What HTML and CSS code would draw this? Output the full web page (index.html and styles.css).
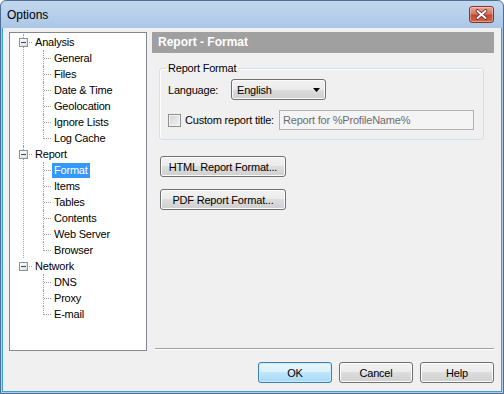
FILE: index.html
```html
<!DOCTYPE html>
<html>

<head>
    <meta charset="UTF-8">
    <title>Options</title>
    <link rel="stylesheet" href="styles.css">
</head>

<body>
    <div class="window">
        <div class="titlebar">
            <span class="title">Options</span>
            <span class="close">
                <svg width="25" height="17" viewBox="0 0 25 17">
                    <path d="M8.5 5 L16.5 12 M16.5 5 L8.5 12" stroke="#6b2418" stroke-width="3.6" stroke-linecap="round" fill="none"/>
                    <path d="M8.5 5 L16.5 12 M16.5 5 L8.5 12" stroke="#fff" stroke-width="2" stroke-linecap="round" fill="none"/>
                </svg>
            </span>
        </div>

        <div class="client">
            <div class="main">
                <!-- page tree -->
                <div class="tree-box">
                    <ul class="tree">
                        <li class="node">
                            <div class="row"><span class="toggle"></span><span class="dots"></span><span class="label">Analysis</span></div>
                            <ul class="children">
                                <li><span class="label">General</span></li>
                                <li><span class="label">Files</span></li>
                                <li><span class="label">Date &amp; Time</span></li>
                                <li><span class="label">Geolocation</span></li>
                                <li><span class="label">Ignore Lists</span></li>
                                <li><span class="label">Log Cache</span></li>
                            </ul>
                        </li>
                        <li class="node">
                            <div class="row"><span class="toggle"></span><span class="dots"></span><span class="label">Report</span></div>
                            <ul class="children">
                                <li><span class="label selected">Format</span></li>
                                <li><span class="label">Items</span></li>
                                <li><span class="label">Tables</span></li>
                                <li><span class="label">Contents</span></li>
                                <li><span class="label">Web Server</span></li>
                                <li><span class="label">Browser</span></li>
                            </ul>
                        </li>
                        <li class="node">
                            <div class="row"><span class="toggle"></span><span class="dots"></span><span class="label">Network</span></div>
                            <ul class="children">
                                <li><span class="label">DNS</span></li>
                                <li><span class="label">Proxy</span></li>
                                <li><span class="label">E-mail</span></li>
                            </ul>
                        </li>
                    </ul>
                </div>

                <!-- settings page -->
                <div class="panel">
                    <div class="panel-head">Report - Format</div>
                    <fieldset class="group">
                        <legend>Report Format</legend>
                        <div class="field-row">
                            <span class="field-label">Language:</span>
                            <div class="dropdown">
                                <span>English</span>
                                <svg class="arrow" width="7" height="4" viewBox="0 0 7 4"><polygon points="0,0 7,0 3.5,4" fill="#000"/></svg>
                            </div>
                        </div>
                        <div class="field-row title-row">
                            <label class="check"><span class="checkbox"></span>Custom report title:</label>
                            <div class="textbox">Report for %ProfileName%</div>
                        </div>
                    </fieldset>
                    <button class="btn btn-wide btn-first">HTML Report Format...</button>
                    <button class="btn btn-wide btn-second">PDF Report Format...</button>
                    <div class="separator"></div>
                </div>
            </div>

            <div class="footer">
                <button class="btn btn-default">OK</button>
                <button class="btn">Cancel</button>
                <button class="btn">Help</button>
            </div>
        </div>
    </div>
</body>

</html>
```

FILE: styles.css
```css
/* dialog window */
body {
    margin: 0;
    font-family: "Liberation Sans", Arial, sans-serif;
    font-size: 11px;
    letter-spacing: -0.2px;
    color: #000;
}

.window {
    width: 504px;
    height: 394px;
    box-sizing: border-box;
    display: flex;
    flex-direction: column;
    border: 1px solid #4d6f96;
    border-radius: 6px 6px 0 0;
    padding: 0 1px 1px 1px;
    background: linear-gradient(#c3d8ef, #aac6e6 28px, #b4cdea);
}

.titlebar {
    height: 27px;
    display: flex;
    align-items: center;
    justify-content: space-between;
    padding: 0 8px 0 5px;
}

.title {
    font-size: 12px;
    letter-spacing: 0;
    color: #000;
}

.close {
    width: 25px;
    height: 17px;
    box-sizing: border-box;
    border: 1px solid #8a3426;
    border-radius: 3px;
    background: linear-gradient(#e9a698, #d67563 45%, #c4462f 55%, #d0684f);
    box-shadow: inset 0 0 0 1px rgba(255, 255, 255, 0.35);
    display: flex;
}

.close svg {
    margin: -1px;
}

.client {
    flex: 1;
    display: flex;
    flex-direction: column;
    background: #f0f0f0;
    border: 1px solid #3aa0d8;
    border-top: none;
    padding: 4px 7px 8px 6px;
}

.main {
    display: flex;
    height: 319px;
}

/* tree */
.tree-box {
    width: 138px;
    box-sizing: border-box;
    border: 1px solid #828790;
    background: #fff;
}

.tree,
.children {
    list-style: none;
    margin: 0;
    padding: 0;
}

.tree {
    padding-top: 1px;
}

.node {
    margin-left: 13px;
    border-left: 1px dotted #a0a0a0;
}

.node:last-child {
    border-left-color: transparent;
}

.row {
    display: flex;
    align-items: center;
    height: 16px;
}

.toggle {
    width: 9px;
    height: 9px;
    box-sizing: border-box;
    margin-left: -5px;
    border: 1px solid #919191;
    background: linear-gradient(135deg, #ffffff, #dcdcdc);
    display: flex;
    align-items: center;
    justify-content: center;
}

.toggle::after {
    content: '';
    width: 5px;
    height: 1px;
    background: #2b4a9b;
}

.dots {
    width: 5px;
    height: 1px;
    background: linear-gradient(to right, #a0a0a0 1px, transparent 1px) 1px 0 / 2px 1px repeat-x;
}

.label {
    padding: 0 2px;
    line-height: 15px;
    white-space: nowrap;
}

.label.selected {
    background: #3399ff;
    color: #fff;
}

.children {
    margin-left: 19px;
}

.children li {
    display: flex;
    align-items: flex-end;
    height: 16px;
}

.children li::before {
    content: '';
    width: 8px;
    align-self: stretch;
    border-left: 1px dotted #a0a0a0;
    background: linear-gradient(to right, #a0a0a0 1px, transparent 1px) 0 8px / 2px 1px repeat-x;
}

.children li:last-child::before {
    align-self: flex-start;
    height: 9px;
}

/* right page */
.panel {
    width: 342px;
    margin-left: 5px;
    display: flex;
    flex-direction: column;
    align-items: flex-start;
    padding-bottom: 1px;
    box-sizing: border-box;
}

.panel-head {
    align-self: stretch;
    height: 21px;
    line-height: 21px;
    padding-left: 6px;
    background: #a0a0a0;
    color: #fff;
    font-weight: bold;
    font-size: 12px;
    letter-spacing: 0;
}

.group {
    width: 325px;
    box-sizing: border-box;
    margin: 9px 0 0 7px;
    padding: 0 8px 9px 8px;
    border: 1px solid #d5dfe5;
    border-radius: 3px;
    box-shadow: inset 1px 1px 0 #fff;
    min-width: 0;
}

.group legend {
    padding: 0 2px;
    margin-left: -2px;
    line-height: 13px;
}

.field-row {
    display: flex;
    align-items: center;
    margin-top: 4px;
}

.field-label {
    width: 63px;
}

.dropdown {
    width: 95px;
    height: 21px;
    box-sizing: border-box;
    border: 1px solid #707070;
    border-radius: 3px;
    background: linear-gradient(#f2f2f2, #ebebeb 50%, #dddddd 50%, #cfcfcf);
    box-shadow: inset 0 0 0 1px #fbfbfb;
    display: flex;
    align-items: center;
    padding-left: 5px;
    font-size: 11px;
}

.dropdown .arrow {
    margin-left: auto;
    margin-right: 5px;
}

.title-row {
    margin-top: 10px;
}

.check {
    width: 111px;
    display: flex;
    align-items: center;
    white-space: nowrap;
}

.checkbox {
    width: 13px;
    height: 13px;
    box-sizing: border-box;
    margin-right: 4px;
    border: 1px solid #8e8f8f;
    background: linear-gradient(135deg, #cfd2d6, #f4f4f4);
    box-shadow: inset 0 0 0 1px #f4f4f4;
}

.textbox {
    width: 195px;
    height: 20px;
    box-sizing: border-box;
    border: 1px solid #adb2b5;
    background: #f4f4f4;
    color: #6d6d6d;
    line-height: 18px;
    padding-left: 3px;
}

/* buttons */
.btn {
    height: 21px;
    box-sizing: border-box;
    padding: 0;
    border: 1px solid #707070;
    border-radius: 3px;
    background: linear-gradient(#f2f2f2, #ebebeb 50%, #dddddd 50%, #cfcfcf);
    box-shadow: inset 0 0 0 1px #fcfcfc;
    font-family: "Liberation Sans", Arial, sans-serif;
    font-size: 11px;
    letter-spacing: -0.2px;
    color: #000;
}

.btn-wide {
    width: 126px;
    margin-left: 8px;
}

.btn-first {
    margin-top: 16px;
}

.btn-second {
    margin-top: 12px;
}

.btn-default {
    border-color: #3c7fb1;
    background: linear-gradient(#eaf6fd, #d9f0fc 50%, #bee6fd 50%, #a7d9f5);
    box-shadow: inset 0 0 0 1px #c8ecfd;
}

.separator {
    align-self: stretch;
    margin: auto 0 0 3px;
    border-top: 1px solid #a0a0a0;
    border-bottom: 1px solid #fff;
}

.footer {
    display: flex;
    justify-content: flex-end;
    gap: 7px;
    margin-top: 11px;
}

.footer .btn {
    width: 74px;
}
```
